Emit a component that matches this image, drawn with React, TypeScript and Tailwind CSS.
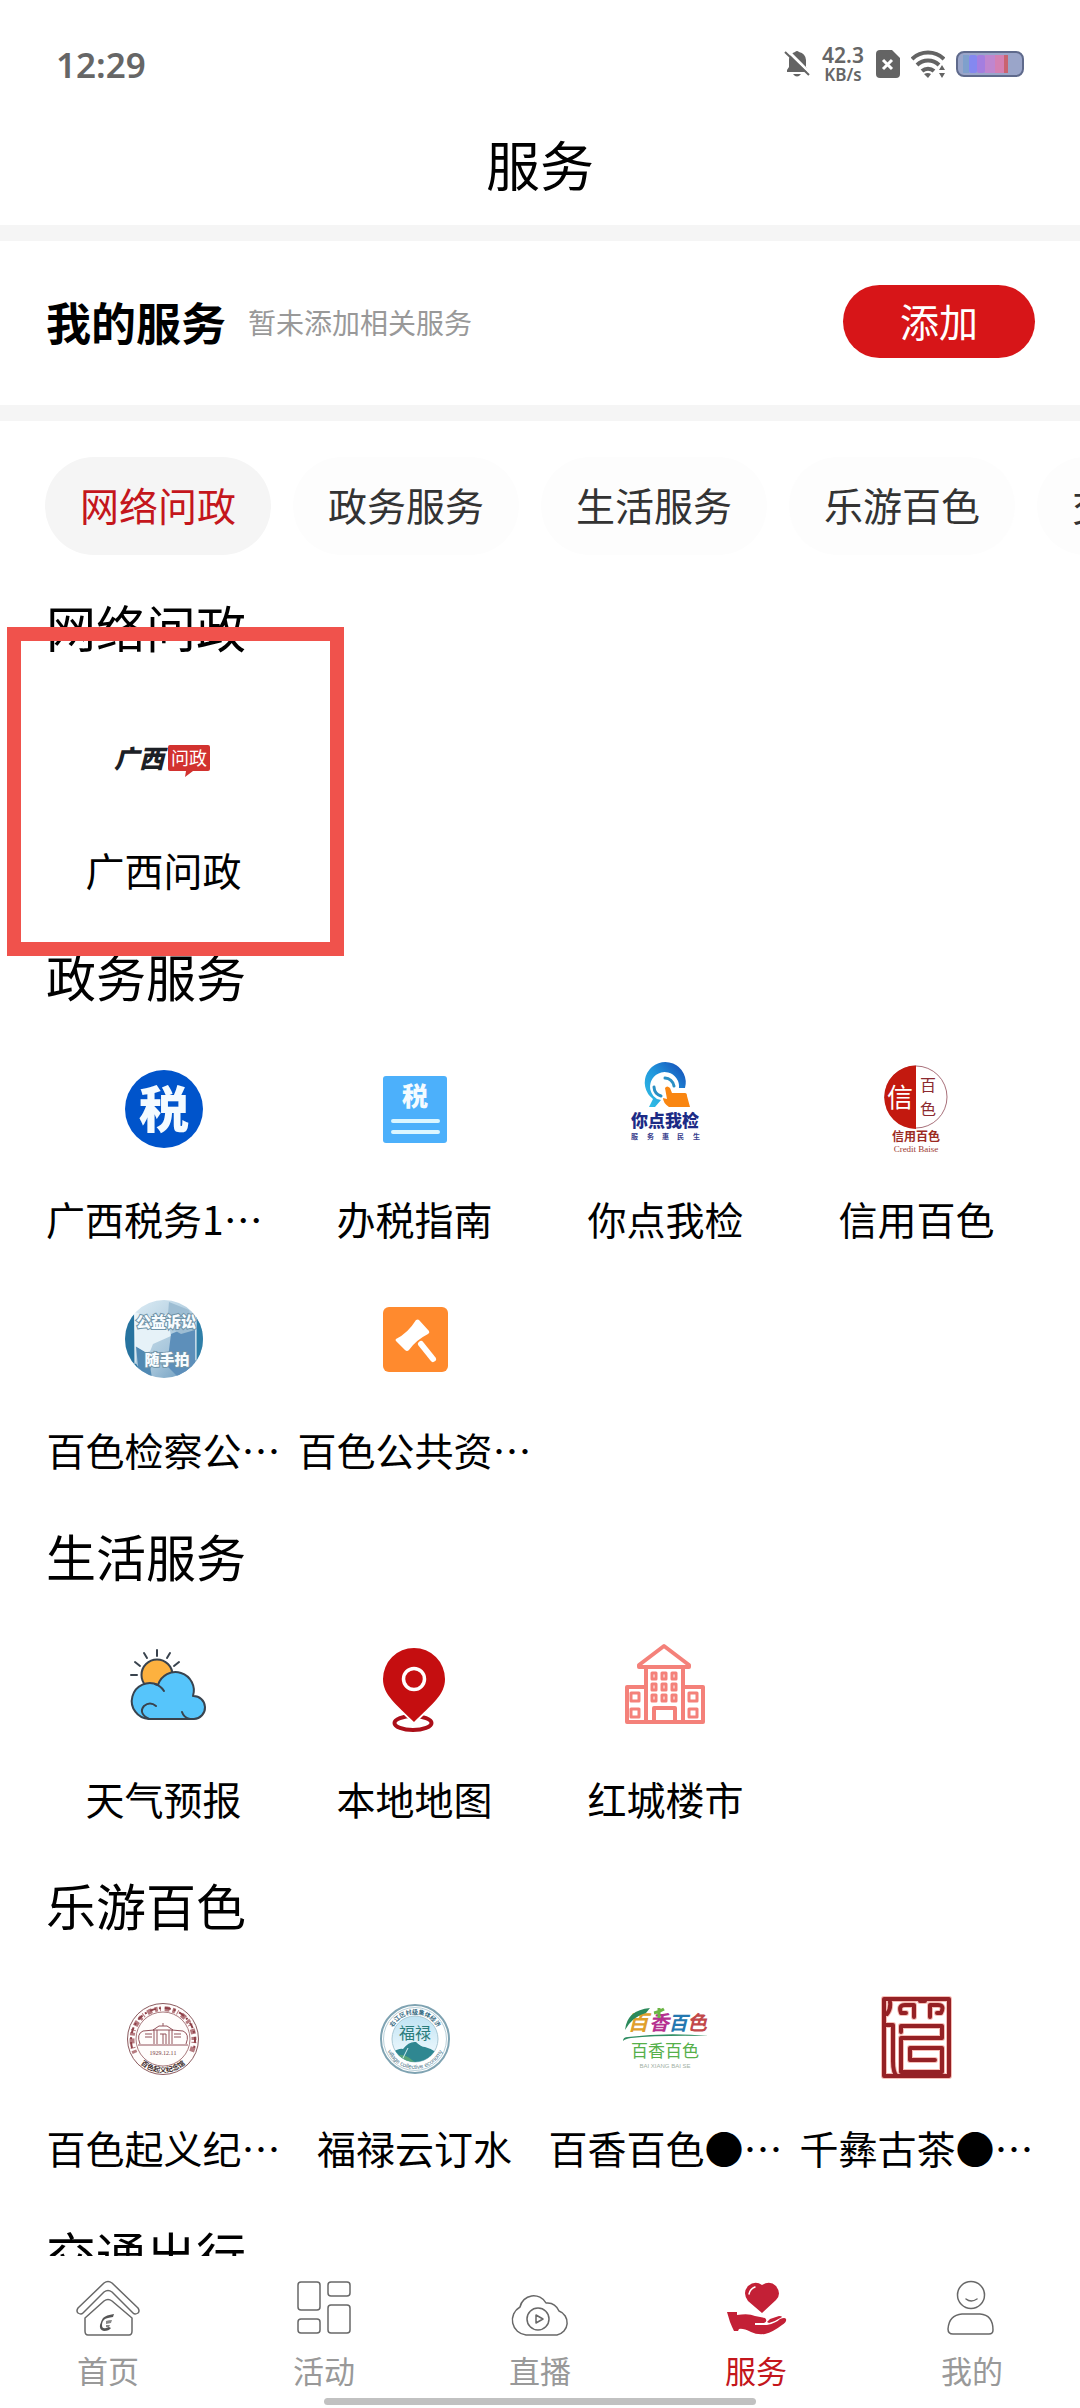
import type { ReactNode } from "react";

const CJK = '"Noto Sans CJK SC", sans-serif';

function Glyph({ children, label }: { children: ReactNode; label: string }) {
  return (
    <svg viewBox="0 0 110 110" className="h-[110px] w-[110px]" role="img" aria-label={label} fontFamily={CJK}>
      {children}
    </svg>
  );
}

function WenzhengLogo() {
  return (
    <Glyph label="广西问政">
      <text x="5" y="64" fontSize="25" fontWeight="900" fontStyle="italic" fill="#1c2026">广西</text>
      <path d="M61 41h38a2 2 0 0 1 2 2v22a2 2 0 0 1-2 2H84l-8 6 1-6H61a2 2 0 0 1-2-2V43a2 2 0 0 1 2-2z" fill="#d2322f" />
      <text x="80" y="61" fontSize="18" fill="#fff" textAnchor="middle">问政</text>
    </Glyph>
  );
}

function TaxRound() {
  return (
    <Glyph label="税务">
      <circle cx="55" cy="56" r="39" fill="#0054cb" />
      <text x="55" y="75" fontSize="50" fontWeight="900" fill="#f4fbff" textAnchor="middle">税</text>
    </Glyph>
  );
}

function TaxGuide() {
  return (
    <Glyph label="办税">
      <rect x="23" y="23" width="64" height="67" rx="3" fill="#4cb0fb" />
      <text x="55" y="53" fontSize="26" fontWeight="900" fill="#f4fbff" textAnchor="middle">税</text>
      <path d="M33 68h45M33 79h45" stroke="#dcf6ff" strokeWidth="4" strokeLinecap="round" />
    </Glyph>
  );
}

function CheckLogo() {
  return (
    <Glyph label="你点我检 服务惠民生">
      <defs>
        <linearGradient id="ring" x1="0" y1="1" x2="1" y2="0">
          <stop offset="0" stopColor="#33c3e6" />
          <stop offset="0.5" stopColor="#2196dc" />
          <stop offset="1" stopColor="#1446b4" />
        </linearGradient>
      </defs>
      <path d="M38 54l4-8A20.500 20.500 0 1 1 74 35h-6A14.500 14.500 0 1 0 46 46l4 1-6 7z" fill="url(#ring)" />
      <path d="M54 25a10 10 0 0 1 9 8M43 34a10 10 0 0 0 7 9" fill="none" stroke="#2a8fc4" strokeWidth="3" strokeLinecap="round" />
      <path d="M54 35q2-3 5 0l2 5h13q2 0 2 3l3 11H58q-6-4-6-9l4 1z" fill="#f98612" />
      <text x="54" y="74" fontSize="17" fontWeight="900" fill="#1c2b86" textAnchor="middle">你点我检</text>
      <text x="20 36 51 66 82" y="86" fontSize="7" fontWeight="700" fill="#3a3f8d">服务惠民生</text>
    </Glyph>
  );
}

function CreditLogo() {
  return (
    <Glyph label="信用百色 Credit Baise">
      <circle cx="54" cy="44" r="31" fill="#fff" stroke="#a8707a" strokeWidth="1" />
      <path d="M54 12.500V76A31.500 31.500 0 0 1 54 12.500z" fill="#c3190f" />
      <text x="38" y="54" fontSize="26" fill="#fff" textAnchor="middle">信</text>
      <text x="66" y="38" fontSize="16" fill="#8c2a30" textAnchor="middle">百</text>
      <text x="66" y="62" fontSize="16" fill="#8c2a30" textAnchor="middle">色</text>
      <text x="54" y="88" fontSize="12" fontWeight="700" fill="#9c2a22" textAnchor="middle">信用百色</text>
      <text x="54" y="99" fontSize="9" fill="#9c3a32" textAnchor="middle" fontFamily='"Liberation Serif", serif'>Credit Baise</text>
    </Glyph>
  );
}

function SnapPhoto() {
  return (
    <Glyph label="公益诉讼随手拍">
      <defs>
        <clipPath id="photo"><circle cx="55" cy="55" r="39" /></clipPath>
        <linearGradient id="sky" x1="0" y1="0" x2="1" y2="1">
          <stop offset="0" stopColor="#e2f0f7" />
          <stop offset="0.600" stopColor="#a7c6db" />
          <stop offset="1" stopColor="#5b8fb6" />
        </linearGradient>
      </defs>
      <g clipPath="url(#photo)">
        <rect x="16" y="16" width="78" height="78" fill="url(#sky)" />
        <path d="M16 34l9-4 1 48 10 16H16z" fill="#27739f" />
        <path d="M27 62l12 8 4 24H30z" fill="#5089b3" />
        <path d="M26 28q20 8 32 2l4 22-18 8-4 10-14-8z" fill="#e6f2f8" />
        <path d="M62 50l24-10v40l-16 14-12-12z" fill="#5d8fba" />
        <path d="M87 26h7v50h-7z" fill="#2f7fa8" />
        <path d="M60 18l20 8 6 20-14 4-14-8z" fill="#9dbdd3" />
        <path d="M26 28v52M87 28v48" stroke="#f2f9fc" strokeWidth="1" />
        <g fontWeight="900" fill="#f8fcfe" stroke="#6f93a8" strokeWidth="2" paintOrder="stroke" textAnchor="middle">
          <text x="57" y="43" fontSize="15">公益诉讼</text>
          <text x="58" y="81" fontSize="15">随手拍</text>
        </g>
      </g>
    </Glyph>
  );
}

function Auction() {
  return (
    <Glyph label="公共资源">
      <rect x="23" y="23" width="65" height="65" rx="6" fill="#ff8a2e" />
      <path d="M36 55q12-6 20-19 2-1 3 0l10 11q1 2-1 3-12 6-19 16-2 2-4 0l-9-9q-1-1 0-2z" fill="#fff" />
      <path d="M61 60l12 15" stroke="#fff" strokeWidth="6" strokeLinecap="round" />
    </Glyph>
  );
}

function Weather() {
  return (
    <Glyph label="天气">
      <g stroke="#39434e" strokeWidth="2" strokeLinecap="round" strokeLinejoin="round" fill="none">
        <circle cx="48" cy="42" r="15.500" fill="#fdb13f" />
        <path d="M48 17v6M35 20l3 5M61 20l-3 5M26 29l5 4M70 29l-5 4M22 42h6" />
        <path d="M40 86A18 18 0 1 1 49 52A17.500 17.500 0 1 1 84 63A11.500 11.500 0 0 1 85 86z" fill="#56c5fb" />
        <path d="M46 51q6 2 9 7M47 73q-6-5-12 0-6 7 5 13M73 79q2 6 8 7" />
      </g>
    </Glyph>
  );
}

function MapPin() {
  return (
    <Glyph label="地图">
      <ellipse cx="53" cy="90" rx="18.500" ry="7" fill="none" stroke="#ab0f19" strokeWidth="4" />
      <path d="M54 15a31 31 0 0 1 31 31c0 16-13 25-31 43-18-18-31-27-31-43a31 31 0 0 1 31-31z" fill="#c50e10" stroke="#fff" strokeWidth="4" paintOrder="stroke" />
      <circle cx="54" cy="46" r="10.500" fill="none" stroke="#fff" strokeWidth="3.500" />
    </Glyph>
  );
}

function Building() {
  return (
    <Glyph label="楼市">
      <g fill="none" stroke="#f4817a" strokeWidth="4" strokeLinejoin="round">
        <path d="M53 13l25 19v2H28v-2z" />
        <path d="M35 34v55M72 34v55" />
        <path d="M35 54H16v35h76V54H72" />
        <path d="M43 89V75h21v14" />
        <path d="M20 60h8v8h-8zM20 76h8v8h-8zM78 60h8v8h-8zM78 76h8v8h-8z" strokeWidth="3" />
        <g strokeWidth="3">
          <path d="M41 40h4v6h-4zM51 40h4v6h-4zM61 40h4v6h-4z" />
          <path d="M41 51h4v6h-4zM51 51h4v6h-4zM61 51h4v6h-4z" />
          <path d="M41 62h4v6h-4zM51 62h4v6h-4zM61 62h4v6h-4z" />
        </g>
      </g>
    </Glyph>
  );
}

function Memorial() {
  return (
    <Glyph label="百色起义纪念馆">
      <defs><path id="memArc" d="M20.500 57a33.500 33.500 0 0 0 67 0" /></defs>
      <circle cx="54" cy="57" r="35.500" fill="#fffdfc" stroke="#8a5a5e" strokeWidth="1" />
      <circle cx="54" cy="57" r="27" fill="none" stroke="#a8797c" strokeWidth="1" />
      <path d="M26 71A31 31 0 1 1 82 71" fill="none" stroke="#b57a7f" strokeWidth="5" strokeDasharray="3 2 1 4 5 3" />
      <path d="M23 66A32 32 0 1 1 85 66" fill="none" stroke="#8e4048" strokeWidth="2" strokeDasharray="6 3 2 4" />
      <g fill="none" stroke="#92525a" strokeWidth="1">
        <path d="M29 63h50M34 49q-7 3-3 13M74 49q7 3 3 13M34 49l11-1v14M74 49l-11-1v14M36 52h7M65 52h7M36 55h7M65 55h7" />
        <path d="M44 48l6-4h8l6 4zM54 41v3M48 48v14M60 48v14M51 52h6v10M54 52v10" />
      </g>
      <text x="54" y="73" fontSize="6" fill="#7a4044" textAnchor="middle" fontFamily='"Liberation Serif", serif'>1929.12.11</text>
      <text fontSize="7" fontWeight="700" fill="#3c2b2b" textAnchor="middle">
        <textPath href="#memArc" startOffset="50%">百色起义纪念馆</textPath>
      </text>
    </Glyph>
  );
}

function Fulu() {
  return (
    <Glyph label="福禄">
      <defs>
        <path id="fuluTop" d="M30 57a25 25 0 0 1 50 0" />
        <path id="fuluBottom" d="M25 57a30 30 0 0 0 60 0" />
        <clipPath id="fuluClip"><circle cx="55" cy="57" r="23" /></clipPath>
        <linearGradient id="fuluSky" x1="0" y1="0" x2="0" y2="1">
          <stop offset="0" stopColor="#bfe3f3" />
          <stop offset="1" stopColor="#f6fcff" />
        </linearGradient>
      </defs>
      <circle cx="55" cy="57" r="34" fill="#fff" stroke="#7fa3b2" strokeWidth="2" />
      <circle cx="55" cy="57" r="31.500" fill="none" stroke="#b9d0d9" strokeWidth="1" />
      <circle cx="55" cy="57" r="23" fill="url(#fuluSky)" stroke="#a9c8d4" strokeWidth="1" />
      <g clipPath="url(#fuluClip)">
        <path d="M30 72q8-6 13-5 6-8 13-7 5 5 9 5 8 2 14 7v12H30z" fill="#2f8791" />
        <path d="M30 76q12-7 22 2t26-6v14H30z" fill="#58a578" />
        <path d="M48 66l-6 12" stroke="#d5eff5" strokeWidth="1" />
      </g>
      <text x="55" y="57" fontSize="16" fill="#2b7d7c" textAnchor="middle">福禄</text>
      <text fontSize="6" fontWeight="700" fill="#34697f" textAnchor="middle">
        <textPath href="#fuluTop" startOffset="50%">右江区村级集体经济</textPath>
      </text>
      <text fontSize="6" fill="#4a7287" textAnchor="middle" fontFamily='"Liberation Sans", sans-serif'>
        <textPath href="#fuluBottom" startOffset="50%">village collective economy</textPath>
      </text>
    </Glyph>
  );
}

function Baixiang() {
  return (
    <Glyph label="百香百色">
      <g fontWeight="700" fontStyle="italic" textAnchor="middle">
        <text x="27" y="48" fontSize="21" fill="#e0a02c">百</text>
        <text x="48" y="48" fontSize="20" fill="#b5308f">香</text>
        <text x="67" y="48" fontSize="19" fill="#2478b0">百</text>
        <text x="86" y="48" fontSize="20" fill="#c2484a">色</text>
      </g>
      <path d="M14 48Q16 28 39 26l-4 5Q22 34 14 48z" fill="#2c8a5c" />
      <path d="M43 31q5-1 10-4M48 26v10" stroke="#6bb544" strokeWidth="3" fill="none" />
      <path d="M12 59q0-4 5-4 40-5 81-1-50-1-78 2-6 1-8 3z" fill="#2f8e63" />
      <text x="54" y="75" fontSize="17" fill="#56b04a" textAnchor="middle">百香百色</text>
      <text x="54" y="86" fontSize="6" fill="#9fb0a4" textAnchor="middle" fontFamily='"Liberation Sans", sans-serif'>BAI XIANG BAI SE</text>
    </Glyph>
  );
}

function TeaSeal() {
  const d =
    "M22 17h65v77H22zM28 20q1 7-3 12M22 43h9v36q0 12 4 15M58 19h5M44 31h-5q-3-8 4-8h9v12M75 31h4q4-8-3-8h-8v12M39 50v-6h41v12H39v34h41V66H48v12h25";
  return (
    <Glyph label="千彝古茶">
      <path d={d} fill="none" stroke="#f6bdb6" strokeWidth="6" strokeLinejoin="round" strokeLinecap="round" />
      <path d={d} fill="none" stroke="#952125" strokeWidth="4" strokeLinejoin="round" strokeLinecap="round" />
    </Glyph>
  );
}

type Item = { name: string; icon: ReactNode; left?: boolean };

const sections: { title: string; marked?: boolean; items: Item[] }[] = [
  { title: "网络问政", marked: true, items: [{ name: "广西问政", icon: <WenzhengLogo /> }] },
  {
    title: "政务服务",
    items: [
      { name: "广西税务1…", icon: <TaxRound />, left: true },
      { name: "办税指南", icon: <TaxGuide /> },
      { name: "你点我检", icon: <CheckLogo /> },
      { name: "信用百色", icon: <CreditLogo /> },
      { name: "百色检察公…", icon: <SnapPhoto /> },
      { name: "百色公共资…", icon: <Auction /> },
    ],
  },
  {
    title: "生活服务",
    items: [
      { name: "天气预报", icon: <Weather /> },
      { name: "本地地图", icon: <MapPin /> },
      { name: "红城楼市", icon: <Building /> },
    ],
  },
  {
    title: "乐游百色",
    items: [
      { name: "百色起义纪…", icon: <Memorial /> },
      { name: "福禄云订水", icon: <Fulu /> },
      { name: "百香百色●…", icon: <Baixiang /> },
      { name: "千彝古茶●…", icon: <TeaSeal /> },
    ],
  },
  { title: "交通出行", items: [] },
];

const tabs = ["网络问政", "政务服务", "生活服务", "乐游百色", "交通出行"];

function StatusBar() {
  return (
    <div className="flex h-32 items-center justify-between px-14 font-['Noto_Sans'] font-semibold text-[#666]">
      <span className="text-[35px] leading-none">12:29</span>
      <div className="flex items-center gap-[11px]">
        <svg viewBox="0 0 26 30" className="h-[30px] w-[26px]" fill="#646464" aria-label="静音">
          <path d="M3 23v-2l2-3v-8a9 9 0 0 1 6-7q2-2 4 0a9 9 0 0 1 7 8v7l2 3v2zM9 25h8q-4 5-8 0z" />
          <path d="M2 0l25 25" stroke="#fff" strokeWidth="3" />
          <path d="M1 3l24 23" stroke="#646464" strokeWidth="2" />
        </svg>
        <span className="flex w-11 flex-col items-center">
          <span className="text-[21px] leading-[20px]">42.3</span>
          <span className="text-[17px] leading-[19px]">KB/s</span>
        </span>
        <svg viewBox="0 0 24 28" className="h-7 w-6" aria-label="无 SIM 卡">
          <path d="M4 0h12l8 8v16a4 4 0 0 1-4 4H4a4 4 0 0 1-4-4V4a4 4 0 0 1 4-4z" fill="#646464" />
          <path d="M7 10l9 9M16 10l-9 9" stroke="#fff" strokeWidth="3" />
        </svg>
        <svg viewBox="0 0 34 28" className="h-7 w-[34px]" fill="none" stroke="#646464" strokeWidth="4" aria-label="Wi-Fi">
          <path d="M1 9a23 23 0 0 1 32 0M6 15a16 16 0 0 1 22 0M11 21a9 9 0 0 1 12 0" />
          <path d="M13 24q4-2 7 0l-3 4z" fill="#646464" stroke="none" />
          <path d="M31 15l3 5h-6zM31 28l3-5h-6z" fill="#646464" stroke="none" />
        </svg>
        <svg viewBox="0 0 68 26" className="h-[26px] w-[68px]" aria-label="电池">
          <rect x="1" y="1" width="66" height="24" rx="7" fill="#9aa5c9" stroke="#5f6a8c" strokeWidth="2" />
          <rect x="7" y="4" width="6" height="18" fill="#7fa0cc" />
          <rect x="13" y="4" width="8" height="18" rx="2" fill="#8488f0" />
          <rect x="21" y="4" width="8" height="18" rx="2" fill="#a47ee0" />
          <rect x="29" y="4" width="10" height="18" fill="#bf86cf" />
          <rect x="39" y="4" width="9" height="18" fill="#d480b2" />
          <rect x="48" y="4" width="4" height="18" fill="#c9636f" />
        </svg>
      </div>
    </div>
  );
}

const navIcon = "h-14 w-16";

const nav: { name: string; active?: boolean; icon: ReactNode }[] = [
  {
    name: "首页",
    icon: (
      <svg viewBox="0 0 64 56" className={navIcon} fill="none" stroke="#686868" strokeWidth="1.500" strokeLinejoin="round">
        <path d="M28 3q4-3 8 0l26 25q2 3 0 5-3 2-5 0L36 12q-4-3-8 0L7 33q-2 2-5 0-2-2 0-5z" />
        <path d="M28 21q4-3 8 0l20 17v13q0 4-3 4H12q-3 0-3-4V38z" />
        <path d="M27 38q3-3 11-4l-1 3q-6 1-8 2-3 2-3 6 0 4 4 3l3-1 2 1q-2 3-7 3-5-1-4-6 1-4 3-7z" fill="#555" stroke="none" />
        <path d="M30 41q3-1 6-1l-1 3-5 1zM30 45h4l-1 2h-3z" fill="#888" stroke="none" />
      </svg>
    ),
  },
  {
    name: "活动",
    icon: (
      <svg viewBox="0 0 64 56" className={navIcon} fill="none" stroke="#686868" strokeWidth="1.500">
        <rect x="6" y="2" width="22" height="28" rx="3" />
        <rect x="36" y="2" width="22" height="14" rx="3" />
        <rect x="6" y="39" width="22" height="14" rx="3" />
        <rect x="36" y="25" width="22" height="28" rx="3" />
      </svg>
    ),
  },
  {
    name: "直播",
    icon: (
      <svg viewBox="0 0 64 56" className={navIcon} fill="none" stroke="#686868" strokeWidth="1.500" strokeLinejoin="round">
        <path d="M18 55A15 15 0 0 1 12 27A14 14 0 0 1 38 23Q47 22 51 31A12.500 12.500 0 0 1 49 55z" />
        <circle cx="30" cy="39" r="11" />
        <path d="M28 35v8l7-4z" />
      </svg>
    ),
  },
  {
    name: "服务",
    active: true,
    icon: (
      <svg viewBox="0 0 64 56" className={navIcon} fill="#c32036">
        <path d="M38 33L24 21Q18 13 24 6q7-6 14-1 8-5 14 1 6 8 0 14z" />
        <path d="M25 14q1-5 6-7" fill="none" stroke="#fff" strokeWidth="1.500" strokeLinecap="round" />
        <path d="M3 32h10v3q12-2 18 1l10 2q3 3-1 5H31v2h12q9-2 13-6 5-2 6 0 1 3-4 6-9 7-17 9-8 1-14-2-8-4-12-3l-1 2H10q-2-4-4-9z" />
        <path d="M43 42l3-3 9-3q3 0 3 1-6 4-13 6z" />
      </svg>
    ),
  },
  {
    name: "我的",
    icon: (
      <svg viewBox="0 0 64 56" className={navIcon} fill="none" stroke="#686868" strokeWidth="1.500" strokeLinecap="round">
        <circle cx="31" cy="15" r="13.500" />
        <path d="M26 19q5 4 11 0" />
        <path d="M22 34h18q13 1 13 16 0 4-4 4H13q-5 0-5-5 1-14 14-15z" />
      </svg>
    ),
  },
];

export default function App() {
  return (
    <div className="flex h-screen flex-col bg-white font-['Noto_Sans_CJK_SC',sans-serif] text-black">
      <header>
        <StatusBar />
        <h1 className="pb-[25px] text-center text-[54px] leading-[72px]">服务</h1>
      </header>

      <section className="flex shrink-0 items-center border-y-[16px] border-[#f5f5f5] pt-[44px] pr-[45px] pb-[47px] pl-[46px]">
        <h2 className="text-[45px] leading-[73px] font-bold">我的服务</h2>
        <p className="ml-[22px] text-[28px] text-[#999]">暂未添加相关服务</p>
        <button type="button" className="ml-auto rounded-full bg-[#d71518] px-[57px] pb-[3px] text-[39px] leading-[70px] text-white">
          添加
        </button>
      </section>

      <div className="flex shrink-0 gap-[22px] overflow-hidden pt-9 pb-[15px] pl-[45px]" role="tablist">
        {tabs.map((tab, i) => (
          <button
            key={tab}
            type="button"
            role="tab"
            aria-selected={i === 0}
            className={
              i === 0
                ? "shrink-0 rounded-full bg-[#f5f5f5] px-[35px] pb-[3px] text-[39px] leading-[95px] text-[#c4161c]"
                : "shrink-0 rounded-full bg-[#fdfdfd] px-[35px] pb-[3px] text-[39px] leading-[95px] text-[#333]"
            }
          >
            {tab}
          </button>
        ))}
      </div>

      <main className="min-h-0 flex-1 overflow-y-auto [scrollbar-width:none]">
        {sections.map((section) => (
          <section key={section.title} className="relative px-[38px]">
            <h2 className="pb-1.5 pl-2 text-[50px] leading-[112px]">{section.title}</h2>
            <div className="grid grid-cols-4">
              {section.items.map((item) => (
                <a key={item.name} href="#" className="flex flex-col items-center gap-[25px] px-2 pt-4 pb-5">
                  {item.icon}
                  <span
                    className={
                      item.left
                        ? "w-full text-left text-[39px] leading-[60px] whitespace-nowrap"
                        : "text-[39px] leading-[60px] whitespace-nowrap"
                    }
                  >
                    {item.name}
                  </span>
                </a>
              ))}
            </div>
            {section.marked && (
              <div className="pointer-events-none absolute top-[57px] left-[7px] z-10 h-[329px] w-[337px] border-[14px] border-[#f0524c]" />
            )}
          </section>
        ))}
      </main>

      <nav className="shrink-0 bg-white pt-6 pb-[3px]">
        <div className="grid grid-cols-5">
          {nav.map((item) => (
            <a key={item.name} href="#" className="flex flex-col items-center gap-[18px]">
              {item.icon}
              <span
                className={
                  item.active ? "text-[31px] leading-8 text-[#c4161c]" : "text-[31px] leading-8 text-[#999]"
                }
              >
                {item.name}
              </span>
            </a>
          ))}
        </div>
        <div className="mx-auto mt-3 h-[7px] w-2/5 rounded-full bg-[#c1c1c1]" />
      </nav>
    </div>
  );
}
